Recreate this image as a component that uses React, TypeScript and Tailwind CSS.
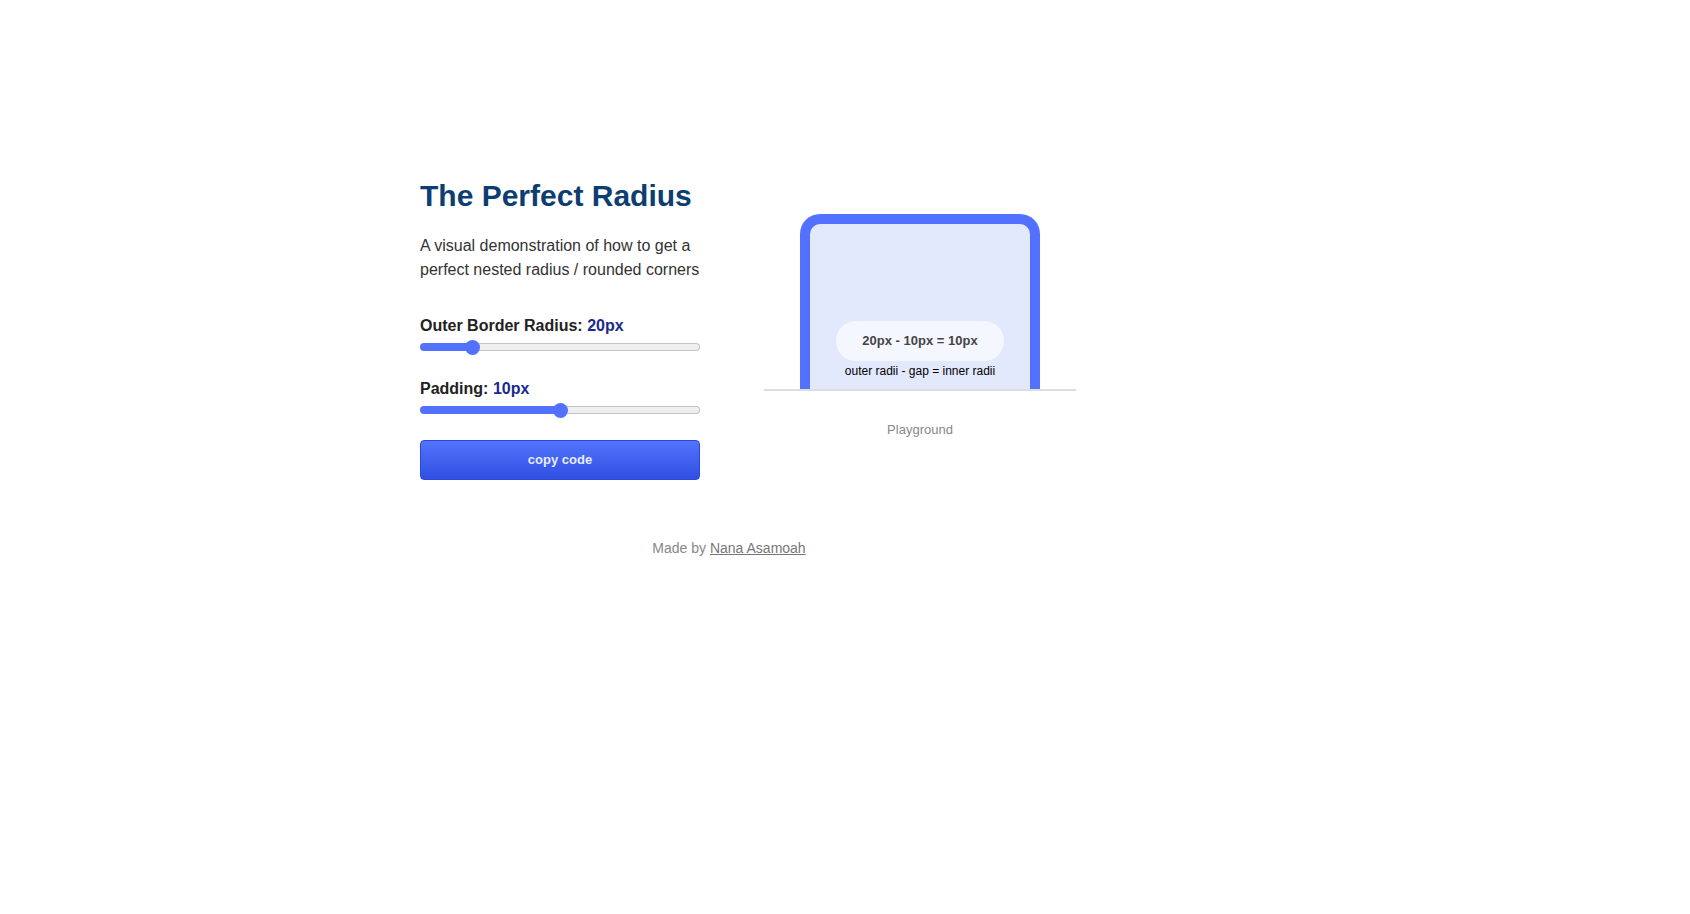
import { useState } from 'react';

const RADIUS_MAX = 120;
const PADDING_MAX = 20;

function trackStyle(value: number, max: number) {
  // thumb is 15px wide on a 280px track, so fill up to the thumb centre
  const pct = ((7.5 + (value / max) * 265) / 280) * 100;
  return {
    background: `linear-gradient(to right, #5271ff ${pct}%, transparent ${pct}%) border-box, linear-gradient(#efefef, #efefef) padding-box, linear-gradient(#c4c4c4, #c4c4c4) border-box`,
  };
}

function Slider({
  value,
  max,
  onChange,
}: {
  value: number;
  max: number;
  onChange: (v: number) => void;
}) {
  return (
    <div className="flex h-4 items-center">
      <input
        type="range"
        min={0}
        max={max}
        value={value}
        onChange={(e) => onChange(Number(e.target.value))}
        style={trackStyle(value, max)}
        className="h-2 w-full cursor-pointer appearance-none rounded-full border border-transparent outline-none [&::-webkit-slider-thumb]:h-[15px] [&::-webkit-slider-thumb]:w-[15px] [&::-webkit-slider-thumb]:appearance-none [&::-webkit-slider-thumb]:rounded-full [&::-webkit-slider-thumb]:bg-[#5271ff]"
      />
    </div>
  );
}

export default function App() {
  const [radius, setRadius] = useState(20);
  const [padding, setPadding] = useState(10);
  const inner = Math.max(radius - padding, 0);

  return (
    <div
      className="min-h-screen bg-white pt-[178px] pl-[420px]"
      style={{ fontFamily: "'Liberation Sans', Arial, sans-serif" }}
    >
      <div className="flex items-center gap-[64px]">
        <div className="w-[280px] shrink-0">
          <h1 className="text-[30px] font-bold leading-[36px] text-[#0c3e72]">The Perfect Radius</h1>
          <p className="mt-[20px] text-base leading-6 text-[#333]">
            A visual demonstration of how to get a perfect nested radius / rounded corners
          </p>

          <label className="mt-[32px] block text-base font-bold leading-6 text-[#222]">
            Outer Border Radius: <span className="text-[#1b2a8f]">{radius}px</span>
          </label>
          <div className="mt-[1px]">
            <Slider value={radius} max={RADIUS_MAX} onChange={setRadius} />
          </div>

          <label className="mt-[22px] block text-base font-bold leading-6 text-[#222]">
            Padding: <span className="text-[#1b2a8f]">{padding}px</span>
          </label>
          <div className="mt-[1px]">
            <Slider value={padding} max={PADDING_MAX} onChange={setPadding} />
          </div>

          <button className="mt-[22px] flex h-10 w-full items-center justify-center rounded-[4px] border border-[#2c46d6] bg-gradient-to-b from-[#5373fb] to-[#2f4fe2] text-[13px] font-bold text-[#e8edff]">
            copy code
          </button>
        </div>

        <div className="w-[312px] shrink-0 pb-[4px]">
          <div className="flex h-[177px] justify-center overflow-hidden border-b-2 border-[#dddddd]">
            <div
              className="h-[300px] w-[240px] shrink-0 bg-[#5271ff]"
              style={{ borderRadius: radius, padding }}
            >
              <div
                className="flex h-full flex-col items-center bg-[#e3e9fd] pt-[97px]"
                style={{ borderRadius: inner }}
              >
                <div className="flex h-10 items-center rounded-full bg-[#f5f7ff] px-[26px] text-[13px] font-bold text-[#444]">
                  {radius}px - {padding}px = {inner}px
                </div>
                <div className="mt-[3px] text-xs leading-[14px] text-black">outer radii - gap = inner radii</div>
              </div>
            </div>
          </div>
          <p className="mt-[29px] text-center text-[13px] leading-5 text-[#888]">Playground</p>
        </div>
      </div>

      <footer className="mt-[58px] w-[618px] text-center text-sm leading-5 text-[#888]">
        Made by{' '}
        <a href="#" className="text-[#777] underline">
          Nana Asamoah
        </a>
      </footer>
    </div>
  );
}
